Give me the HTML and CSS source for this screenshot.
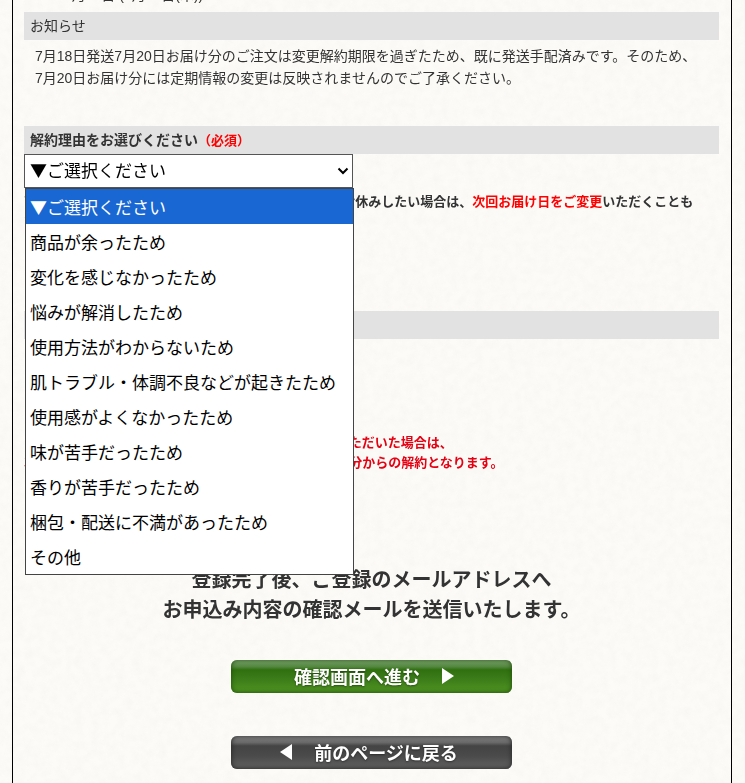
FILE: index.html
```
<!DOCTYPE html>
<html lang="ja">
<head>
  <meta charset="UTF-8" />
  <meta name="viewport" content="width=device-width, initial-scale=1.0" />
  <title>定期コースの解約</title>
  <link rel="stylesheet" href="styles.css">
</head>
<body>
  <!-- paper texture -->
  <svg class="paper" aria-hidden="true">
    <filter id="grain">
      <feTurbulence type="fractalNoise" baseFrequency="0.12" numOctaves="3" seed="4" />
      <feColorMatrix values="0 0 0 0 0.7  0 0 0 0 0.68  0 0 0 0 0.6  0.16 0 0 0 -0.05" />
    </filter>
    <rect width="100%" height="100%" filter="url(#grain)" />
  </svg>

  <main class="container">
    <form action="#">
      <div class="delivery"><p>7月18日 (7月20日(木))</p></div>

      <section class="notice">
        <h2 class="bar">お知らせ</h2>
        <p>7月18日発送7月20日お届け分のご注文は変更解約期限を過ぎたため、既に発送手配済みです。そのため、7月20日お届け分には定期情報の変更は反映されませんのでご了承ください。</p>
      </section>

      <section class="reason">
        <h2 class="bar strong"><label for="reason">解約理由をお選びください<span class="required">（必須）</span></label></h2>
        <div class="dropdown">
          <select id="reason">
            <option>▼ご選択ください</option>
          </select>
          <svg class="chevron" width="12" height="8" viewBox="0 0 12 8" aria-hidden="true"><path d="M1.5 1.5L6 6L10.5 1.5" fill="none" stroke="#000" stroke-width="2" /></svg>
          <ul class="options" role="listbox" aria-label="解約理由">
            <li role="option" class="selected" aria-selected="true">▼ご選択ください</li>
            <li role="option">商品が余ったため</li>
            <li role="option">変化を感じなかったため</li>
            <li role="option">悩みが解消したため</li>
            <li role="option">使用方法がわからないため</li>
            <li role="option">肌トラブル・体調不良などが起きたため</li>
            <li role="option">使用感がよくなかったため</li>
            <li role="option">味が苦手だったため</li>
            <li role="option">香りが苦手だったため</li>
            <li role="option">梱包・配送に不満があったため</li>
            <li role="option">その他</li>
          </ul>
        </div>
        <p class="small">商品が余っている場合や、1回分だけお届けを一時的にお休みしたい場合は、<span class="red">次回お届け日をご変更</span>いただくことも<br>できます。</p>
      </section>

      <section class="procedure">
        <h2 class="bar strong">解約のお手続き</h2>
        <p class="small red">※次回のお届け分の変更解約期限を過ぎた後にご登録いただいた場合は、<br>次回のお届け分は通常どおり発送され、その次のお届け分からの解約となります。</p>
      </section>

      <p class="message">登録完了後、ご登録のメールアドレスへ<br>お申込み内容の確認メールを送信いたします。</p>

      <div class="buttons">
        <button type="submit" class="next">確認画面へ進む
          <svg width="12" height="16" viewBox="0 0 12 16" aria-hidden="true"><path d="M0 0L12 8L0 16Z" fill="#fff" /></svg>
        </button>
        <button type="button" class="back">
          <svg width="12" height="16" viewBox="0 0 12 16" aria-hidden="true"><path d="M12 0L0 8L12 16Z" fill="#fff" /></svg>
          前のページに戻る</button>
      </div>
    </form>
  </main>
</body>
</html>
```
FILE: styles.css
```
* {
  box-sizing: border-box;
  margin: 0;
  padding: 0;
}

body {
  font-family: "Liberation Sans", "Noto Sans CJK JP", sans-serif;
  font-size: 14px;
  line-height: 22px;
  background-color: #fcfbf8;
  color: #333;
  padding: 0 13px 0 12px;
}

.paper {
  position: fixed;
  top: 0;
  left: 0;
  width: 100%;
  height: 100%;
  z-index: -1;
}

.container {
  max-width: 720px;
  margin: 0 auto;
  padding: 0 12px 14px 11px;
  border-left: 1px solid #000;
  border-right: 1px solid #000;
}

/* tail of the delivery date row */
.delivery {
  display: flex;
  align-items: flex-end;
  height: 3px;
  margin-bottom: 9px;
  padding-left: 40px;
  overflow: hidden;
}

.delivery p {
  line-height: 16px;
}

.bar {
  padding: 0 6px;
  background-color: #e2e2e2;
  font-size: 14px;
  font-weight: normal;
  line-height: 28px;
}

.strong {
  font-weight: bold;
}

.required {
  color: #f00;
  font-size: 13px;
  line-height: 1;
}

.red {
  color: #e60012;
}

.small {
  font-size: 13px;
  font-weight: bold;
  line-height: 20px;
}

.notice p {
  padding: 5px 16px 0 11px;
}

.notice {
  margin-bottom: 37px;
}

.reason {
  margin-bottom: 79px;
}

.reason .small {
  margin-top: 4px;
}

.reason .red {
  color: #f00;
}

.dropdown {
  position: relative;
  width: 329px;
}

select {
  display: block;
  width: 100%;
  height: 34px;
  padding: 0 20px 3px 5px;
  border: 1px solid #555;
  border-radius: 0;
  background-color: #fff;
  color: #000;
  font-family: "Noto Sans CJK JP", sans-serif;
  font-size: 17px;
  appearance: none;
}

.chevron {
  position: absolute;
  top: 13px;
  right: 4px;
  pointer-events: none;
}

.options {
  position: absolute;
  top: 34px;
  left: 1px;
  width: 100%;
  border: 1px solid #444;
  background-color: #fff;
  color: #000;
  font-family: "Noto Sans CJK JP", sans-serif;
  font-size: 17px;
  line-height: 35px;
  list-style: none;
}

.options li {
  padding: 0 4px;
}

.options .selected {
  background-color: #1967d2;
  color: #fff;
}

.procedure .small {
  margin-top: 94px;
}

.message {
  margin-top: 92px;
  font-size: 20px;
  font-weight: bold;
  line-height: 30px;
  text-align: center;
}

.buttons {
  display: flex;
  flex-direction: column;
  align-items: center;
  gap: 43px;
  margin-top: 35px;
}

button {
  display: flex;
  align-items: center;
  justify-content: center;
  gap: 22px;
  width: 281px;
  height: 33px;
  padding-bottom: 2px;
  border: none;
  border-radius: 6px;
  color: #fff;
  font-family: "Noto Sans CJK JP", sans-serif;
  font-size: 18px;
  font-weight: bold;
  cursor: pointer;
  text-shadow: 0 1px 2px rgba(0, 0, 0, 0.4);
}

.next {
  padding-left: 5px;
  background: linear-gradient(#82a876, #54873f 20%, #30700f 30%, #3d7d1a 60%, #4c8f20 90%);
  box-shadow: inset 0 0 5px #1c4a08;
}

.back {
  padding-right: 5px;
  background: linear-gradient(#888, #686868 20%, #444 30%, #4a4a4a 60%, #5c5c5c 90%);
  box-shadow: inset 0 0 5px #222;
}
```
